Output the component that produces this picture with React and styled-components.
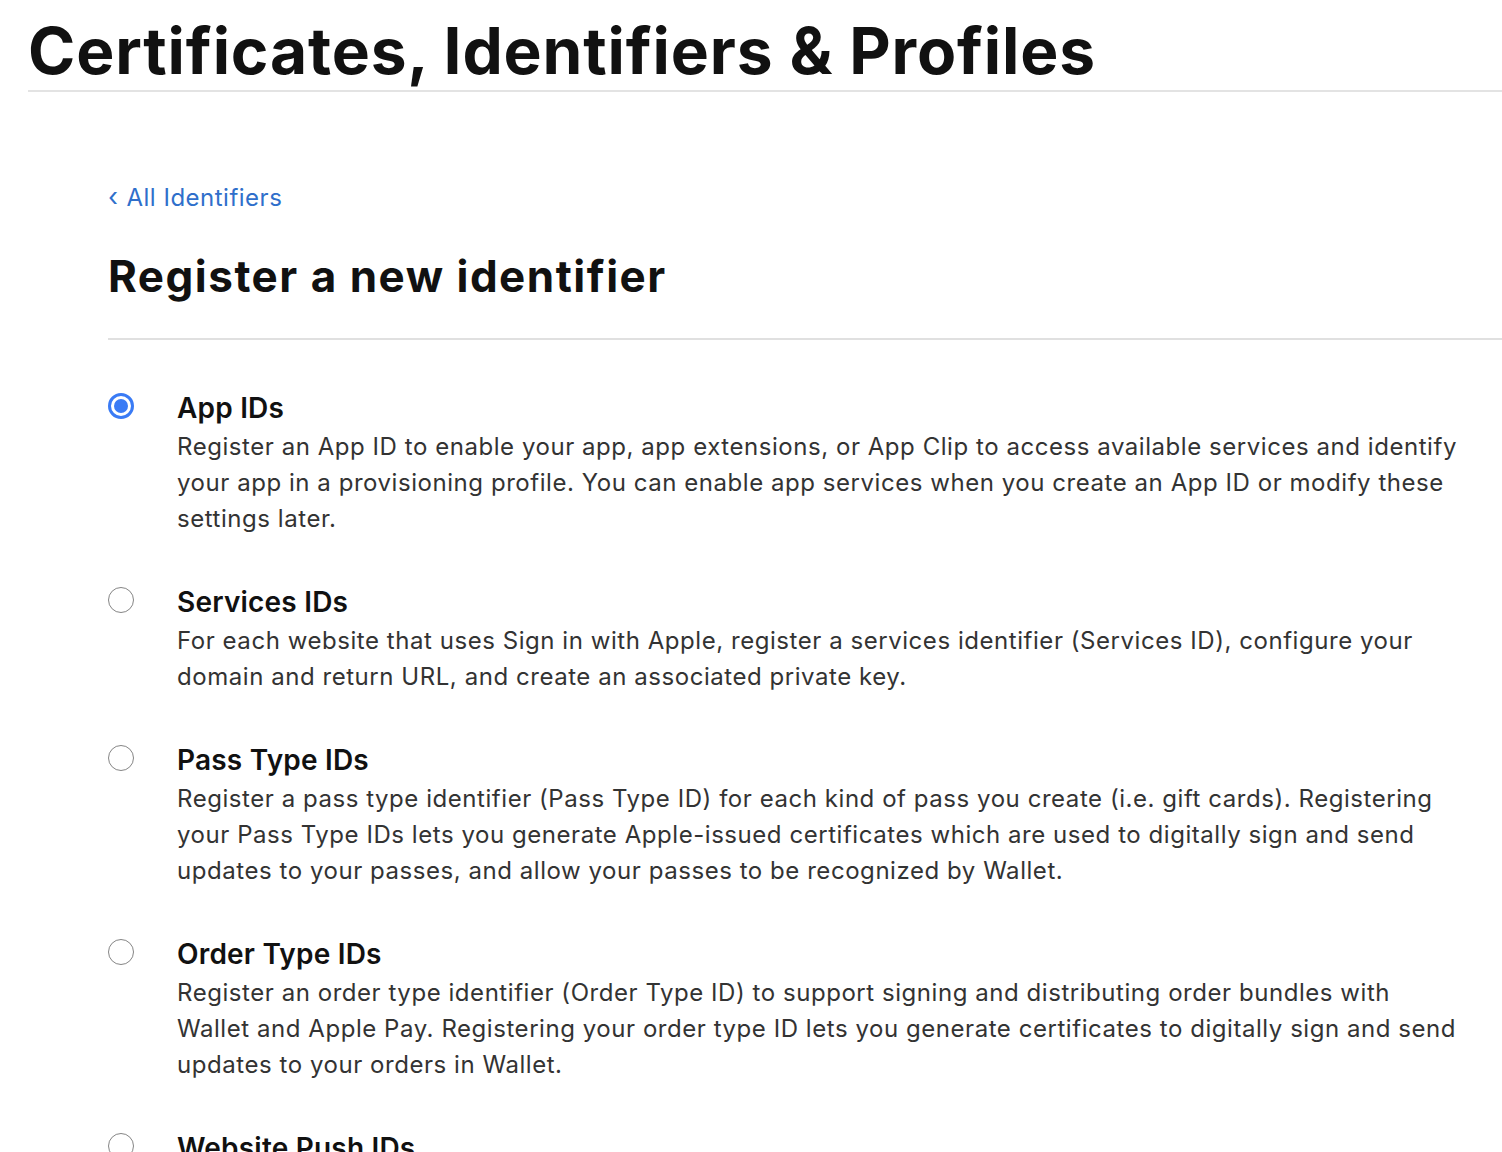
import React from 'react';
import styled, { createGlobalStyle } from 'styled-components';

const GlobalStyle = createGlobalStyle`
  html, body {
    margin: 0;
    padding: 0;
    background: #fff;
    font-family: Inter, "Noto Sans", sans-serif;
    color: #1d1d1f;
    overflow: hidden;
  }
`;

const Page = styled.div`
  width: 1502px;
  height: 1152px;
  overflow: hidden;
  padding-left: 28px;
  box-sizing: border-box;
`;

const PageTitle = styled.h1`
  margin: 0;
  padding-top: 12px;
  height: 78px;
  font-size: 64px;
  line-height: 78px;
  font-weight: 700;
  letter-spacing: 0.85px;
  color: #111;
  border-bottom: 2px solid #e3e3e3;
`;

const Content = styled.div`
  padding-left: 80px;
`;

const BackLink = styled.a`
  display: inline-flex;
  align-items: center;
  gap: 8px;
  margin-top: 90px;
  font-size: 24px;
  line-height: 32px;
  letter-spacing: 0.5px;
  color: #2f6fcb;
  text-decoration: none;
`;

const Chevron = styled.span`
  font-size: 26px;
  line-height: 32px;
  position: relative;
  top: -1px;
`;

const SectionTitle = styled.h2`
  margin: 0;
  padding: 36px 0 36px;
  font-size: 44px;
  line-height: 52px;
  font-weight: 700;
  letter-spacing: 1.5px;
  color: #111;
  border-bottom: 2px solid #e0e0e0;
`;

const List = styled.div`
  display: flex;
  flex-direction: column;
  gap: 49px;
  padding-top: 52px;
`;

const Option = styled.label`
  display: grid;
  grid-template-columns: 69px 1fr;
  cursor: pointer;
`;

const Radio = styled.span`
  width: 26px;
  height: 26px;
  box-sizing: border-box;
  border-radius: 50%;
  margin-top: 1px;
  border: ${p => (p.$checked ? '3px solid #3a7bf5' : '1.5px solid #858585')};
  display: flex;
  align-items: center;
  justify-content: center;
  &::after {
    content: '';
    display: ${p => (p.$checked ? 'block' : 'none')};
    width: 14px;
    height: 14px;
    border-radius: 50%;
    background: #3a7bf5;
  }
`;

const Body = styled.div`
  max-width: 1286px;
`;

const OptionTitle = styled.div`
  font-size: 28px;
  line-height: 32px;
  font-weight: 600;
  letter-spacing: 0.2px;
  color: #111;
  margin-bottom: 5px;
`;

const OptionText = styled.p`
  margin: 0;
  font-size: 24px;
  line-height: 36px;
  letter-spacing: 0.55px;
  color: #333;
`;

const options = [
  {
    title: 'App IDs',
    text: 'Register an App ID to enable your app, app extensions, or App Clip to access available services and identify your app in a provisioning profile. You can enable app services when you create an App ID or modify these settings later.',
    checked: true,
  },
  {
    title: 'Services IDs',
    text: 'For each website that uses Sign in with Apple, register a services identifier (Services ID), configure your domain and return URL, and create an associated private key.',
  },
  {
    title: 'Pass Type IDs',
    text: 'Register a pass type identifier (Pass Type ID) for each kind of pass you create (i.e. gift cards). Registering your Pass Type IDs lets you generate Apple-issued certificates which are used to digitally sign and send updates to your passes, and allow your passes to be recognized by Wallet.',
  },
  {
    title: 'Order Type IDs',
    text: 'Register an order type identifier (Order Type ID) to support signing and distributing order bundles with Wallet and Apple Pay. Registering your order type ID lets you generate certificates to digitally sign and send updates to your orders in Wallet.',
  },
  {
    title: 'Website Push IDs',
    text: 'Register a Website Push ID to send push notifications to Safari users on macOS.',
  },
];

const App = () => {
  return (
    <Page>
      <GlobalStyle />
      <PageTitle>Certificates, Identifiers &amp; Profiles</PageTitle>
      <Content>
        <BackLink href="#">
          <Chevron>‹</Chevron>
          All Identifiers
        </BackLink>
        <SectionTitle>Register a new identifier</SectionTitle>
        <List>
          {options.map(o => (
            <Option key={o.title}>
              <Radio $checked={o.checked} />
              <Body>
                <OptionTitle>{o.title}</OptionTitle>
                <OptionText>{o.text}</OptionText>
              </Body>
            </Option>
          ))}
        </List>
      </Content>
    </Page>
  );
};

export default App;
